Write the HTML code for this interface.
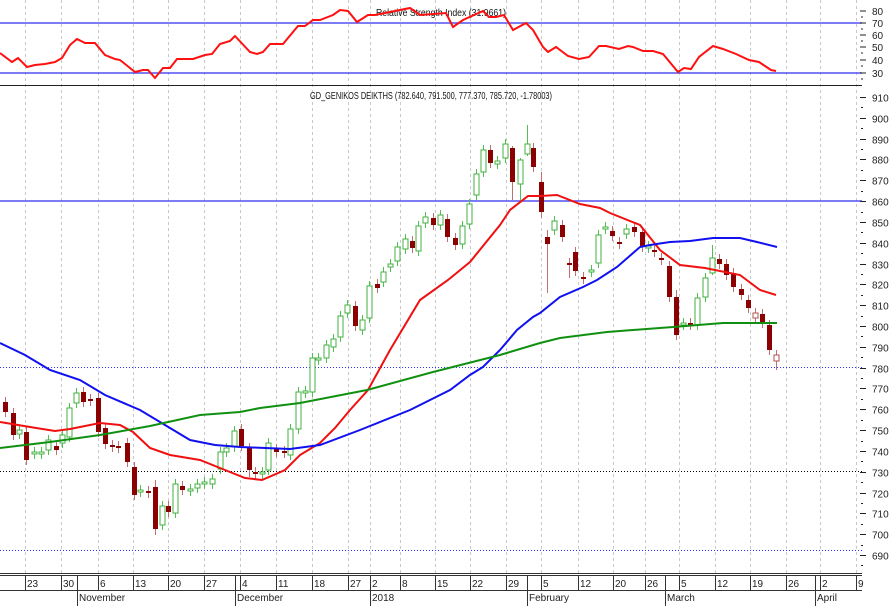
<!DOCTYPE html>
<html><head><meta charset="utf-8"><style>
html,body{margin:0;padding:0;background:#fff;}
svg{display:block;font-family:"Liberation Sans",Arial,sans-serif;}
</style></head><body>
<svg id="s" width="892" height="606" viewBox="0 0 892 606" xmlns="http://www.w3.org/2000/svg">
<rect width="892" height="606" fill="#fff"/>
<g id="grid" stroke="#c8c8c8" stroke-dasharray="3,3" stroke-width="1"></g>
<!-- RSI lines -->
<line x1="0" y1="23" x2="862" y2="23" stroke="#5050f0" stroke-width="1.5"/>
<line x1="0" y1="73" x2="862" y2="73" stroke="#5050f0" stroke-width="1.5"/>
<line x1="0" y1="85.5" x2="862" y2="85.5" stroke="#222" stroke-width="1"/>
<!-- main horizontal lines -->
<line x1="0" y1="201" x2="862" y2="201" stroke="#5050f0" stroke-width="1.5"/>
<line x1="0" y1="367.5" x2="862" y2="367.5" stroke="#3030ff" stroke-width="1" stroke-dasharray="1,2"/>
<line x1="0" y1="471.5" x2="862" y2="471.5" stroke="#000" stroke-width="1" stroke-dasharray="1,2"/>
<line x1="0" y1="550.5" x2="862" y2="550.5" stroke="#3030ff" stroke-width="1" stroke-dasharray="1,2"/>
<text x="376" y="16" font-size="10.5" textLength="130" lengthAdjust="spacingAndGlyphs" fill="#111">Relative Strength Index (31.9661)</text>
<text x="310" y="99" font-size="10.5" textLength="242" lengthAdjust="spacingAndGlyphs" fill="#111">GD_GENIKOS DEIKTHS (782.640, 791.500, 777.370, 785.720, -1.78003)</text>
<g id="cand"></g>
<polyline id="rsi" fill="none" stroke="#ff1010" stroke-width="2"/>
<polyline id="ma1" fill="none" stroke="#f01010" stroke-width="2"/>
<polyline id="ma2" fill="none" stroke="#1010f0" stroke-width="2"/>
<polyline id="ma3" fill="none" stroke="#109010" stroke-width="2"/>
<g id="axis" font-size="10" fill="#222"></g>
<line x1="0" y1="573.5" x2="862" y2="573.5" stroke="#333" stroke-width="1"/>
<line x1="0" y1="575.5" x2="862" y2="575.5" stroke="#333" stroke-width="1"/>
<line x1="0" y1="590.5" x2="862" y2="590.5" stroke="#333" stroke-width="1"/>
<g id="dates" font-size="10" fill="#222"></g>
</svg>
<script>
var NS="http://www.w3.org/2000/svg";
function el(p,t,a,txt){var e=document.createElementNS(NS,t);for(var k in a)e.setAttribute(k,a[k]);if(txt!=null)e.textContent=txt;document.getElementById(p).appendChild(e);return e;}
// grid
var gx=[25,61,98,133,168,204,240,276,312,348,370,400,435,470,506,541,578,613,645,679,715,750,786,820,856];
gx.forEach(function(x){el('grid','line',{x1:x+.5,y1:0,x2:x+.5,y2:573});});
// dates
var dl=[[27,'23'],[63,'30'],[100,'6'],[135,'13'],[170,'20'],[206,'27'],[242,'4'],[278,'11'],[314,'18'],[350,'27'],[372,'2'],[402,'8'],[437,'15'],[472,'22'],[508,'29'],[543,'5'],[580,'12'],[615,'20'],[647,'26'],[681,'5'],[717,'12'],[752,'19'],[788,'26'],[822,'2'],[858,'9']];
dl.forEach(function(d){el('dates','line',{x1:d[0]-1.5,y1:576,x2:d[0]-1.5,y2:590,stroke:'#333'});el('dates','text',{x:d[0],y:587},d[1]);});
[[77,'November'],[235,'December'],[370,'2018'],[527,'February'],[665,'March'],[815,'April']].forEach(function(m){el('dates','line',{x1:m[0]+.5,y1:576,x2:m[0]+.5,y2:606,stroke:'#333'});el('dates','text',{x:m[0]+2,y:601},m[1]);});
// axis
function ty(y,lab){el('axis','line',{x1:860,y1:y,x2:866,y2:y,stroke:'#222'});if(lab)el('axis','text',{x:872,y:y+4},lab);}
[[11,'80'],[23,'70'],[35,'60'],[47,'50'],[60,'40'],[73,'30']].forEach(function(a){ty(a[1]*0+a[0],a[1]);el('axis','line',{x1:861,y1:a[0]+6,x2:863,y2:a[0]+6,stroke:'#222'});});
for(var p=910;p>=690;p-=10){var y=97+(910-p)*2.082;ty(Math.round(y)+.5,String(p));el('axis','line',{x1:861,y1:Math.round(y+10.4)+.5,x2:863,y2:Math.round(y+10.4)+.5,stroke:'#222'});}
// candles [x, open_y, close_y, type] type r=red filled, g=green hollow, h=hollow red
var C=[[5,402,412,'r'],[13,413,435,'r'],[19,430,434,'g'],[26,432,460,'r'],[34,452,454,'g'],[41,452,454,'g'],[48,450,440,'g'],[56,446,450,'r'],[62,443,435,'g'],[69,437,408,'g'],[76,403,393,'g'],[83,392,402,'r'],[90,399,401,'r'],[98,398,432,'r'],[105,428,444,'r'],[112,445,447,'r'],[118,446,448,'r'],[127,443,462,'r'],[134,467,495,'r'],[140,490,492,'g'],[148,491,493,'r'],[155,487,529,'r'],[162,525,506,'g'],[168,506,512,'r'],[175,513,484,'g'],[182,486,490,'r'],[190,489,491,'g'],[197,488,484,'g'],[204,484,482,'g'],[212,484,479,'g'],[220,469,452,'g'],[226,452,448,'g'],[234,447,431,'g'],[241,429,446,'r'],[249,447,470,'r'],[255,472,474,'r'],[262,474,472,'g'],[268,470,443,'g'],[276,449,452,'r'],[284,451,453,'r'],[290,455,429,'g'],[298,429,392,'g'],[305,393,391,'g'],[312,392,358,'g'],[318,360,358,'g'],[326,358,345,'g'],[333,347,339,'g'],[340,337,316,'g'],[347,313,305,'g'],[355,306,326,'r'],[362,330,320,'g'],[369,318,286,'g'],[377,284,288,'r'],[383,282,272,'g'],[390,267,264,'g'],[397,261,247,'g'],[405,249,239,'g'],[412,241,248,'r'],[418,251,226,'g'],[425,223,217,'g'],[433,218,225,'r'],[440,225,215,'g'],[447,219,237,'r'],[455,238,245,'r'],[462,244,226,'g'],[469,224,204,'g'],[476,195,174,'g'],[483,172,150,'g'],[490,150,163,'r'],[497,164,161,'g'],[505,158,144,'g'],[512,148,182,'r'],[520,184,160,'g'],[527,154,144,'g'],[533,148,167,'r'],[541,182,212,'r'],[547,237,244,'r'],[554,230,221,'g'],[562,225,237,'r'],[569,263,265,'r'],[575,252,271,'r'],[583,277,279,'r'],[591,272,270,'g'],[598,263,235,'g'],[605,229,227,'g'],[612,231,236,'r'],[619,242,244,'r'],[626,234,229,'g'],[634,227,232,'r'],[642,232,247,'r'],[648,248,246,'g'],[654,250,252,'r'],[661,258,260,'r'],[669,266,297,'r'],[676,297,335,'r'],[683,325,323,'g'],[690,323,325,'r'],[697,325,298,'g'],[705,297,278,'g'],[712,273,258,'g'],[719,259,264,'r'],[726,264,275,'r'],[733,273,287,'r'],[741,289,295,'r'],[748,300,308,'r'],[755,313,318,'h'],[762,314,323,'r'],[769,325,350,'r'],[776,355,361,'h']];
var W={541:[172,218],547:[230,293],569:[258,278],676:[290,340],527:[125,156],520:[158,203],512:[146,200],712:[245,275],776:[350,370],155:[480,535],134:[462,500],249:[443,477]};
C.forEach(function(c){var x=c[0],t=Math.min(c[1],c[2]),b=Math.max(c[1],c[2]);var hi=t-5,lo=b+5;if(W[x]){hi=W[x][0];lo=W[x][1];}
var wc=c[3]=='g'?'#50c050':'#c07070';el('cand','line',{x1:x+.5,y1:hi,x2:x+.5,y2:lo,stroke:wc});
if(c[3]=='r')el('cand','rect',{x:x-2,y:t,width:5,height:Math.max(b-t,2),fill:'#8b0000'});
else el('cand','rect',{x:x-2,y:t,width:5,height:Math.max(b-t,2),fill:'#fff',stroke:c[3]=='g'?'#40b040':'#b05050','stroke-width':1});});
function pl(id,pts){document.getElementById(id).setAttribute('points',pts.map(function(p){return p.join(',');}).join(' '));}
pl('rsi',[[0,53],[12,62],[18,58],[27,67],[35,65],[45,64],[55,62],[62,58],[70,45],[77,39],[85,43],[95,43],[105,55],[115,59],[120,60],[135,72],[143,70],[148,70],[155,78],[163,68],[170,68],[177,59],[193,59],[205,55],[212,54],[220,44],[230,41],[235,36],[250,52],[257,54],[263,52],[270,44],[283,44],[298,26],[305,26],[313,20],[320,20],[333,15],[340,10],[348,11],[357,22],[368,15],[375,15],[385,13],[400,10],[410,8],[420,15],[446,13],[453,27],[463,20],[483,11],[489,17],[496,17],[504,15],[513,30],[526,23],[533,30],[543,47],[548,52],[556,47],[568,56],[579,59],[589,57],[599,46],[606,46],[619,49],[628,46],[633,47],[643,51],[653,51],[663,54],[678,72],[684,68],[691,69],[699,57],[713,46],[723,49],[736,54],[749,60],[759,62],[771,70],[776,71]]);
pl('ma1',[[0,422],[30,427],[55,431],[70,429],[100,423],[120,425],[133,432],[150,448],[170,455],[200,460],[225,470],[245,478],[262,480],[285,470],[300,455],[320,443],[335,428],[350,410],[368,390],[390,350],[420,300],[448,280],[470,262],[500,225],[510,210],[528,196],[540,196],[557,195],[580,204],[600,208],[610,213],[640,225],[660,250],[680,265],[705,268],[740,275],[760,290],[776,295]]);
pl('ma2',[[0,343],[25,355],[50,370],[80,380],[105,395],[140,410],[165,425],[190,440],[215,445],[240,447],[265,448],[290,449],[320,445],[360,430],[410,410],[430,400],[450,390],[470,375],[483,367],[500,350],[517,330],[533,317],[540,313],[560,297],[583,287],[597,280],[617,267],[640,247],[650,245],[670,242],[690,241],[713,238],[740,238],[757,242],[777,247]]);
pl('ma3',[[0,448],[50,442],[100,435],[150,426],[200,415],[240,412],[260,408],[300,403],[367,390],[433,372],[500,355],[540,343],[560,338],[607,332],[673,327],[723,323],[777,323]]);
</script>
</body></html>
